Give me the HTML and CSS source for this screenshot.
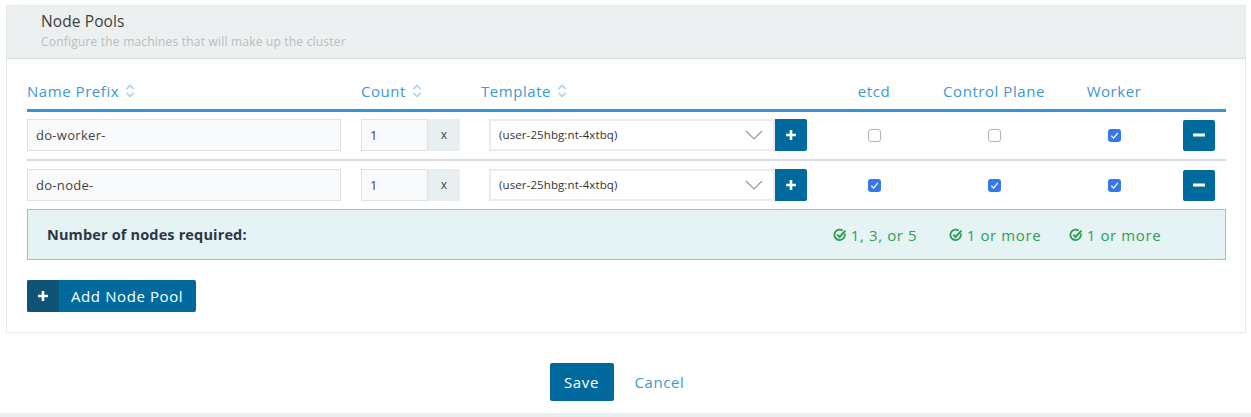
FILE: index.html
```html
<!DOCTYPE html>
<html>
<head>
<meta charset="utf-8">
<link rel="stylesheet" href="styles.css">
</head>
<body>
<div class="page">
  <section class="panel">
    <header class="panel-head">
      <h2 class="title">Node Pools</h2>
      <p class="subtitle">Configure the machines that will make up the cluster</p>
    </header>
    <div class="panel-body">
      <div class="grid thead">
        <div class="th">Name Prefix <span class="sort"><svg viewBox="0 0 10 16" width="10" height="16"><path d="M1.5 6 L5 2.5 L8.5 6 M1.5 10 L5 13.5 L8.5 10" fill="none" stroke="#a9d3f0" stroke-width="1.6"/></svg></span></div>
        <div class="th">Count <span class="sort"><svg viewBox="0 0 10 16" width="10" height="16"><path d="M1.5 6 L5 2.5 L8.5 6 M1.5 10 L5 13.5 L8.5 10" fill="none" stroke="#a9d3f0" stroke-width="1.6"/></svg></span></div>
        <div class="th">Template <span class="sort"><svg viewBox="0 0 10 16" width="10" height="16"><path d="M1.5 6 L5 2.5 L8.5 6 M1.5 10 L5 13.5 L8.5 10" fill="none" stroke="#a9d3f0" stroke-width="1.6"/></svg></span></div>
        <div class="th center">etcd</div>
        <div class="th center">Control Plane</div>
        <div class="th center">Worker</div>
        <div class="th"></div>
      </div>

      <div class="grid row first">
        <div class="c-name"><div class="input">do-worker-</div></div>
        <div class="c-count"><div class="input count">1</div><div class="addon">x</div></div>
        <div class="c-tpl"><div class="select">(user-25hbg:nt-4xtbq)<svg class="chev" viewBox="0 0 18 10" width="18" height="10"><path d="M1 1 L9 9 L17 1" fill="none" stroke="#9a9a9a" stroke-width="1.2"/></svg></div><button class="sq-btn"><svg viewBox="0 0 12 12" width="12" height="12"><path d="M6 1v10M1 6h10" stroke="#fff" stroke-width="2.6"/></svg></button></div>
        <div class="c-cb"><span class="cb"></span></div>
        <div class="c-cb"><span class="cb"></span></div>
        <div class="c-cb"><span class="cb on"><svg viewBox="0 0 13 13" width="13" height="13"><path d="M3.3 6.8 L5.6 9.1 L9.8 3.9" fill="none" stroke="#fff" stroke-width="1.3"/></svg></span></div>
        <div class="c-act"><button class="sq-btn"><svg viewBox="0 0 14 12" width="14" height="12"><path d="M1 6h12" stroke="#fff" stroke-width="3"/></svg></button></div>
      </div>

      <div class="grid row last">
        <div class="c-name"><div class="input">do-node-</div></div>
        <div class="c-count"><div class="input count">1</div><div class="addon">x</div></div>
        <div class="c-tpl"><div class="select">(user-25hbg:nt-4xtbq)<svg class="chev" viewBox="0 0 18 10" width="18" height="10"><path d="M1 1 L9 9 L17 1" fill="none" stroke="#9a9a9a" stroke-width="1.2"/></svg></div><button class="sq-btn"><svg viewBox="0 0 12 12" width="12" height="12"><path d="M6 1v10M1 6h10" stroke="#fff" stroke-width="2.6"/></svg></button></div>
        <div class="c-cb"><span class="cb on"><svg viewBox="0 0 13 13" width="13" height="13"><path d="M3.3 6.8 L5.6 9.1 L9.8 3.9" fill="none" stroke="#fff" stroke-width="1.3"/></svg></span></div>
        <div class="c-cb"><span class="cb on"><svg viewBox="0 0 13 13" width="13" height="13"><path d="M3.3 6.8 L5.6 9.1 L9.8 3.9" fill="none" stroke="#fff" stroke-width="1.3"/></svg></span></div>
        <div class="c-cb"><span class="cb on"><svg viewBox="0 0 13 13" width="13" height="13"><path d="M3.3 6.8 L5.6 9.1 L9.8 3.9" fill="none" stroke="#fff" stroke-width="1.3"/></svg></span></div>
        <div class="c-act"><button class="sq-btn"><svg viewBox="0 0 14 12" width="14" height="12"><path d="M1 6h12" stroke="#fff" stroke-width="3"/></svg></button></div>
      </div>

      <div class="grid notice">
        <div class="n-label">Number of nodes required:</div>
        <div class="req"><svg viewBox="0 0 14 14" width="14" height="14"><path d="M11.6 5.4 A5.2 5.2 0 1 1 9.6 2.6" fill="none" stroke="#2c9c4e" stroke-width="1.8"/><path d="M4.2 6.6 L6.6 9 L12.4 2.6" fill="none" stroke="#2c9c4e" stroke-width="1.9"/></svg>1, 3, or 5</div>
        <div class="req"><svg viewBox="0 0 14 14" width="14" height="14"><path d="M11.6 5.4 A5.2 5.2 0 1 1 9.6 2.6" fill="none" stroke="#2c9c4e" stroke-width="1.8"/><path d="M4.2 6.6 L6.6 9 L12.4 2.6" fill="none" stroke="#2c9c4e" stroke-width="1.9"/></svg>1 or more</div>
        <div class="req"><svg viewBox="0 0 14 14" width="14" height="14"><path d="M11.6 5.4 A5.2 5.2 0 1 1 9.6 2.6" fill="none" stroke="#2c9c4e" stroke-width="1.8"/><path d="M4.2 6.6 L6.6 9 L12.4 2.6" fill="none" stroke="#2c9c4e" stroke-width="1.9"/></svg>1 or more</div>
        <div></div>
      </div>

      <button class="add-btn"><span class="add-icon"><svg viewBox="0 0 12 12" width="12" height="12"><path d="M6 1v10M1 6h10" stroke="#fff" stroke-width="2.6"/></svg></span><span class="add-text">Add Node Pool</span></button>
    </div>
  </section>

  <footer class="actions">
    <button class="save">Save</button>
    <a class="cancel">Cancel</a>
  </footer>
</div>
<div class="bottom-strip"></div>
</body>
</html>
```

FILE: styles.css
```css
* { box-sizing: border-box; }
html, body { margin: 0; padding: 0; background: #fff; }
body {
  font-family: "Open Sans", "Liberation Sans", sans-serif;
  color: #4a4a4a;
  width: 1251px;
  height: 417px;
  overflow: hidden;
  display: flex;
  flex-direction: column;
}
.page { padding: 5px 5px 0 6px; flex: 1; }

.panel { border: 1px solid #e6e9ea; }
.panel-head {
  background: #ecf0f1;
  border-bottom: 1px solid #d9dee0;
  padding: 4px 34px 0;
  height: 53px;
}
.title { margin: 0; font-size: 15.5px; font-weight: 400; color: #3e3e3e; line-height: 22px; letter-spacing: 0.1px; }
.subtitle { margin: 2px 0 0; font-size: 12px; color: #b9bcbe; line-height: 16px; letter-spacing: 0.2px; }

.panel-body { padding: 20px 19px 20px 20px; }

.grid {
  display: grid;
  grid-template-columns: 334px 120px 333px 120px 120px 120px 51px;
  align-items: center;
}
.thead {
  height: 33px;
  border-bottom: 3px solid #3595d6;
  padding-bottom: 6px;
}
.th {
  font-size: 15px;
  letter-spacing: 0.55px;
  color: #3d98d3;
  display: flex;
  align-items: center;
  gap: 6px;
  white-space: nowrap;
}
.th.center { justify-content: center; }
.sort { display: inline-flex; }

.row { padding: 8px 0; border-bottom: 2px solid #dadcdf; }
.row.first { padding-top: 7px; }
.row.last { border-bottom: none; }

.c-name { padding-right: 20px; }
.input {
  height: 32px;
  border: 1px solid #dde1e3;
  background: #f9fafb;
  font-size: 13px;
  letter-spacing: 0.3px;
  color: #444;
  line-height: 30px;
  padding: 0 8px;
}
.c-count { display: flex; padding-right: 21px; }
.input.count { width: 67px; }
.addon {
  width: 32px;
  height: 32px;
  background: #e9eef0;
  font-size: 12px;
  line-height: 32px;
  text-align: center;
  color: #444;
}
.c-tpl { display: flex; padding: 0 7px 0 8px; }
.select {
  flex: 1;
  height: 32px;
  border: 2px solid #eaedee;
  background: #fff;
  font-size: 11.5px;
  letter-spacing: 0.1px;
  color: #333;
  line-height: 28px;
  padding: 0 8px;
  display: flex;
  align-items: center;
  justify-content: space-between;
}
.chev { margin-right: 2px; }
.sq-btn {
  width: 32px;
  height: 32px;
  border: none;
  border-radius: 2px;
  background: #006a9e;
  display: flex;
  align-items: center;
  justify-content: center;
  padding: 0;
}
.c-tpl .sq-btn { border-radius: 0 2px 2px 0; }
.c-cb { display: flex; justify-content: center; }
.cb {
  width: 13px;
  height: 13px;
  border: 1px solid #b3b3b3;
  border-radius: 3px;
  background: #fff;
  display: block;
}
.cb.on {
  border: none;
  background: #3478f0;
}
.cb svg { display: block; }
.c-act { display: flex; justify-content: center; padding-right: 1px; }
.c-act .sq-btn { height: 31px; }

.notice {
  height: 51px;
  border: 1px solid #7fcdd3;
  background: #e5f3f5;
}
.n-label {
  grid-column: 1 / span 3;
  padding-left: 19px;
  font-size: 14.5px;
  letter-spacing: 0.15px;
  font-weight: 700;
  color: #2a3645;
}
.req {
  display: flex;
  justify-content: center;
  align-items: center;
  gap: 4px;
  color: #2f9e52;
  font-size: 15px;
  letter-spacing: 0.6px;
  white-space: nowrap;
}
.req svg { display: block; }

.add-btn {
  margin-top: 20px;
  height: 32px;
  border: none;
  padding: 0;
  border-radius: 2px;
  overflow: hidden;
  display: flex;
  align-items: stretch;
  background: #006a9e;
  font-family: inherit;
}
.add-icon {
  width: 32px;
  background: #0f5477;
  display: flex;
  align-items: center;
  justify-content: center;
}
.add-text {
  color: #fff;
  font-size: 15px;
  letter-spacing: 0.6px;
  padding: 0 13px 0 12px;
  display: flex;
  align-items: center;
}

.actions {
  margin-top: 30px;
  display: flex;
  justify-content: center;
  align-items: center;
  gap: 21px;
  padding-right: 18px;
}
.save {
  width: 64px;
  height: 38px;
  background: #006a9e;
  color: #fff;
  border: none;
  border-radius: 2px;
  font-family: inherit;
  font-size: 15px;
  letter-spacing: 0.6px;
}
.cancel { color: #3d98d3; font-size: 15px; letter-spacing: 0.6px; }

.bottom-strip { height: 4px; background: #e9eeef; }
```
